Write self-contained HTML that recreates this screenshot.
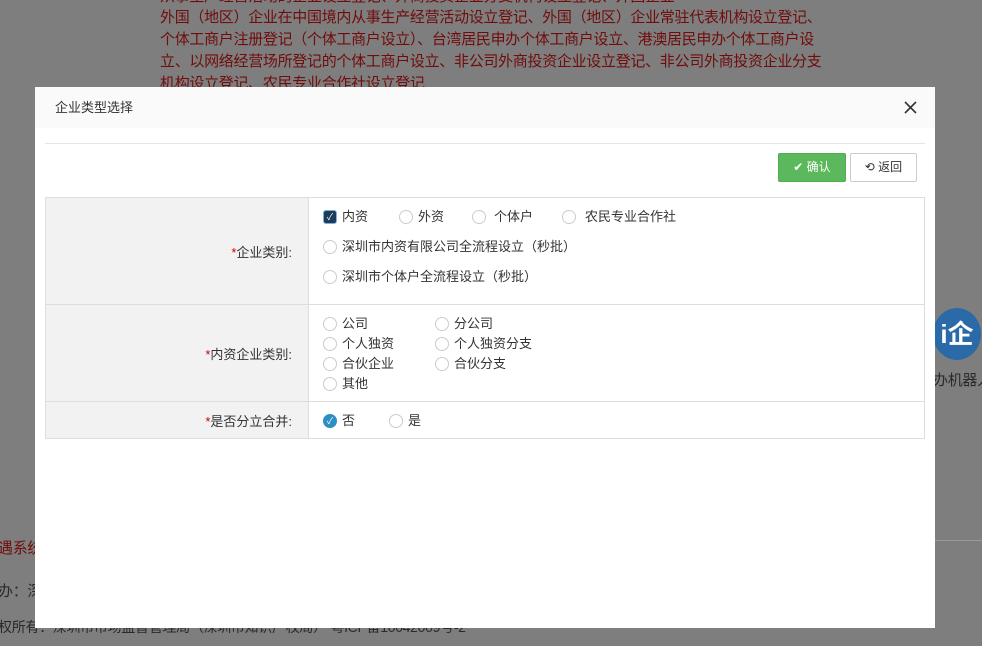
<!DOCTYPE html>
<html><head><meta charset="utf-8"><style>
body{margin:0;width:982px;height:646px;overflow:hidden;background:#7e7e7e;font-family:"Liberation Sans","Noto Sans CJK SC",sans-serif;position:relative}
.bg{position:absolute;color:#700c0c;font-size:15px;line-height:22px;letter-spacing:-0.3px;white-space:nowrap}
.m{position:absolute;left:35px;top:87px;width:900px;height:541px;background:#fff}
.hd{height:41px;background:#fafafa;font-size:13px;color:#333;line-height:41px;padding-left:20px;position:relative}
.x{position:absolute;right:18px;top:14px}
.sep{position:absolute;left:10px;top:56px;width:880px;border-top:1px solid #e5e5e5}
.btn{position:absolute;top:66px;height:29px;box-sizing:border-box;border-radius:2px;font-size:12px;line-height:27px;text-align:center}
table{position:absolute;left:10px;top:110px;width:880px;border-collapse:collapse;font-size:13px;color:#333}
td{border:1px solid #ddd;vertical-align:middle}
td.l{width:263px;background:#f2f2f2;text-align:right;padding-right:16px;box-sizing:border-box}
.r{position:absolute;width:14px;height:14px;border:1px solid #ccc;border-radius:50%;box-sizing:border-box}
.st{color:#c00}
.it{position:absolute;white-space:nowrap;line-height:16px}
</style></head><body>
<div class="bg" style="left:160px;top:-14px">从事生产经营活动的企业设立登记、外商投资企业分支机构设立登记、外国企业</div>
<div class="bg" style="left:160px;top:7px">外国（地区）企业在中国境内从事生产经营活动设立登记、外国（地区）企业常驻代表机构设立登记、<br>个体工商户注册登记（个体工商户设立）、台湾居民申办个体工商户设立、港澳居民申办个体工商户设<br>立、以网络经营场所登记的个体工商户设立、非公司外商投资企业设立登记、非公司外商投资企业分支<br>机构设立登记、农民专业合作社设立登记</div>
<div class="bg" style="left:-2px;top:538px">遇系统</div>
<div class="bg" style="left:-2px;top:581px;color:#2a2a2a">办：深</div>
<div class="bg" style="left:-2px;top:616px;color:#2a2a2a;font-size:14px">权所有：深圳市市场监督管理局（深圳市知识产权局） 粤ICP备10042009号-2</div>
<div style="position:absolute;left:933px;top:308px;width:48px;height:52px;border-radius:50%;background:#2a6aa8;color:#fff;font-size:26px;line-height:52px;text-align:center;font-weight:bold">i企</div>
<div class="bg" style="left:933px;top:370px;color:#2a2a2a">办机器人</div>
<div style="position:absolute;left:935px;top:540px;width:47px;border-top:1px solid #999"></div>
<div class="m">
<div class="hd">企业类型选择<svg class="x" width="13" height="13" viewBox="0 0 13 13"><path d="M1 1L12 12M12 1L1 12" stroke="#333" stroke-width="1.6"/></svg></div>
<div class="sep"></div>
<div class="btn" style="left:743px;width:68px;background:#5cb85c;color:#fff;border:1px solid #4cae4c">✔ 确认</div>
<div class="btn" style="left:815px;width:67px;background:#fff;color:#333;border:1px solid #ccc">⟲ 返回</div>
<table>
<tr style="height:107px"><td class="l"><span class="st">*</span>企业类别:</td><td style="position:relative">
<span class="r" style="left:14px;top:12px;background:#1d3b5a;border:1px solid #7fb0dc;border-radius:3px;color:#fff;font-size:9px;text-align:center;line-height:12px">✓</span><span class="it" style="left:33px;top:11px">内资</span>
<span class="r" style="left:90px;top:12px"></span><span class="it" style="left:109px;top:11px">外资</span>
<span class="r" style="left:163px;top:12px"></span><span class="it" style="left:185px;top:11px">个体户</span>
<span class="r" style="left:253px;top:12px"></span><span class="it" style="left:276px;top:11px">农民专业合作社</span>
<span class="r" style="left:14px;top:42px"></span><span class="it" style="left:33px;top:41px">深圳市内资有限公司全流程设立（秒批）</span>
<span class="r" style="left:14px;top:72px"></span><span class="it" style="left:33px;top:71px">深圳市个体户全流程设立（秒批）</span>
</td></tr>
<tr style="height:97px"><td class="l"><span class="st">*</span>内资企业类别:</td><td style="position:relative">
<span class="r" style="left:14px;top:12px"></span><span class="it" style="left:33px;top:11px">公司</span>
<span class="r" style="left:126px;top:12px"></span><span class="it" style="left:145px;top:11px">分公司</span>
<span class="r" style="left:14px;top:32px"></span><span class="it" style="left:33px;top:31px">个人独资</span>
<span class="r" style="left:126px;top:32px"></span><span class="it" style="left:145px;top:31px">个人独资分支</span>
<span class="r" style="left:14px;top:52px"></span><span class="it" style="left:33px;top:51px">合伙企业</span>
<span class="r" style="left:126px;top:52px"></span><span class="it" style="left:145px;top:51px">合伙分支</span>
<span class="r" style="left:14px;top:72px"></span><span class="it" style="left:33px;top:71px">其他</span>
</td></tr>
<tr style="height:37px"><td class="l"><span class="st">*</span>是否分立合并:</td><td style="position:relative">
<span class="r" style="left:14px;top:12px;background:#2d8fc4;border-color:#2d8fc4;color:#fff;font-size:9px;text-align:center;line-height:12px">✓</span><span class="it" style="left:33px;top:11px">否</span>
<span class="r" style="left:80px;top:12px"></span><span class="it" style="left:99px;top:11px">是</span>
</td></tr>
</table>
</div>
</body></html>
